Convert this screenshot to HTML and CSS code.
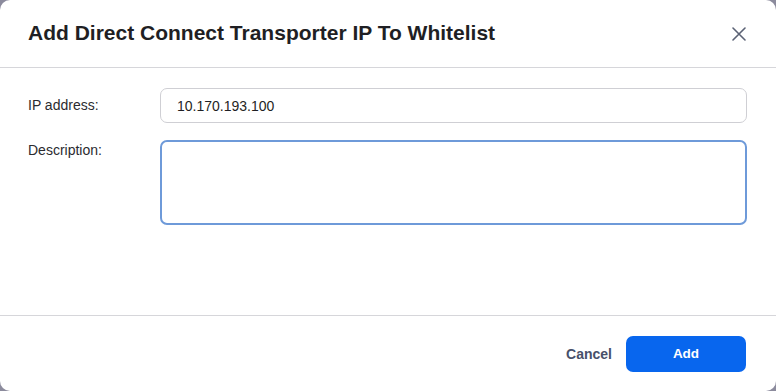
FILE: index.html
```html
<!DOCTYPE html>
<html>
<head>
<meta charset="utf-8">
<link rel="stylesheet" href="styles.css">
</head>
<body>
<div class="dialog">
  <div class="header">
    <h1 class="title">Add Direct Connect Transporter IP To Whitelist</h1>
    <button class="close" aria-label="Close">
      <svg width="14" height="14" viewBox="0 0 14 14"><path d="M1 1L13 13M13 1L1 13" stroke="#5b6275" stroke-width="1.6" stroke-linecap="round"/></svg>
    </button>
  </div>
  <div class="body">
    <div class="row">
      <label class="label">IP address:</label>
      <input class="input" type="text" value="10.170.193.100">
    </div>
    <div class="row">
      <label class="label label-top">Description:</label>
      <textarea class="textarea"></textarea>
    </div>
  </div>
  <div class="footer">
    <button class="btn-cancel">Cancel</button>
    <button class="btn-add">Add</button>
  </div>
</div>
</body>
</html>
```
FILE: styles.css
```css
html, body {
  margin: 0;
  padding: 0;
  background: #8c8b9d;
  width: 776px;
  height: 391px;
  overflow: hidden;
}
.dialog {
  width: 776px;
  height: 391px;
  background: #fff;
  border-radius: 10px;
  display: flex;
  flex-direction: column;
  font-family: "Liberation Sans", Arial, sans-serif;
}
.header {
  height: 67px;
  flex-shrink: 0;
  border-bottom: 1px solid #d6d6da;
  display: flex;
  align-items: center;
  justify-content: space-between;
  padding: 0 28px 0 28px;
}
.title {
  margin: 0;
  font-size: 21px;
  font-weight: bold;
  color: #1f1f24;
  margin-top: -1px;
}
.close {
  border: none;
  background: none;
  padding: 0;
  width: 14px;
  height: 14px;
  display: flex;
  margin-right: 2px;
}
.body {
  flex: 1;
  padding: 20px 29px 0 28px;
}
.row {
  display: flex;
  align-items: flex-start;
  margin-bottom: 17px;
}
.label {
  width: 132px;
  font-size: 14px;
  color: #2b2b2f;
  padding-top: 9px;
  line-height: 17px;
}
.label-top {
  padding-top: 2px;
}
.input {
  flex: 1;
  height: 35px;
  box-sizing: border-box;
  border: 1px solid #cfcfd4;
  border-radius: 7px;
  padding: 0 16px;
  font-family: "Liberation Sans", Arial, sans-serif;
  font-size: 14px;
  color: #1f1f24;
  outline: none;
}
.textarea {
  flex: 1;
  height: 85px;
  box-sizing: border-box;
  border: 2px solid #6e9ad9;
  border-radius: 7px;
  resize: none;
  outline: none;
  margin: 0;
  font-family: "Liberation Sans", Arial, sans-serif;
}
.footer {
  height: 75px;
  flex-shrink: 0;
  border-top: 1px solid #d6d6da;
  display: flex;
  align-items: center;
  justify-content: flex-end;
  padding: 0 30px 0 28px;
  gap: 14px;
}
.btn-cancel {
  border: none;
  background: none;
  font-family: "Liberation Sans", Arial, sans-serif;
  font-size: 14px;
  font-weight: bold;
  color: #47506a;
  padding: 0;
}
.btn-add {
  width: 120px;
  height: 36px;
  border: none;
  border-radius: 7px;
  background: #0866ee;
  color: #fff;
  font-family: "Liberation Sans", Arial, sans-serif;
  font-size: 13.5px;
  font-weight: bold;
}
```
